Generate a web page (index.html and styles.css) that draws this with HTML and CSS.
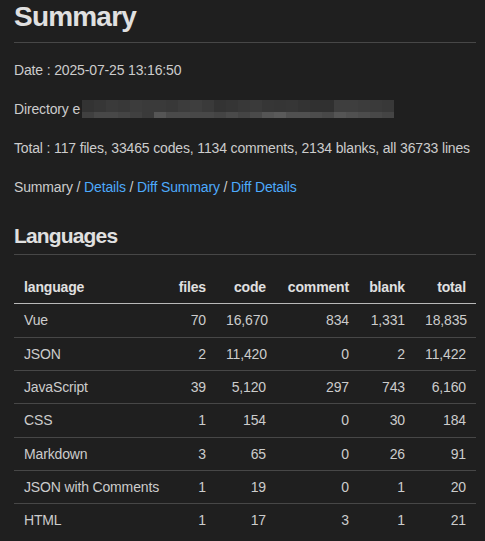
FILE: index.html
```html
<!DOCTYPE html>
<html lang="en">
<head>
<meta charset="utf-8">
<title>Summary</title>
<link rel="stylesheet" href="styles.css">
</head>
<body>
<main class="doc">
  <h1 class="h1">Summary</h1>
  <p class="para">Date : 2025-07-25 13:16:50</p>
  <p class="para">Directory e<span class="blur" aria-hidden="true"></span></p>
  <p class="para">Total : 117 files, 33465 codes, 1134 comments, 2134 blanks, all 36733 lines</p>
  <p class="para">Summary / <a class="link" href="#">Details</a> / <a class="link" href="#">Diff Summary</a> / <a class="link" href="#">Diff Details</a></p>
  <h2 class="h2">Languages</h2>
  <table class="stats">
    <colgroup>
      <col class="c-lang"><col class="c-files"><col class="c-code"><col class="c-comment"><col class="c-blank"><col class="c-total">
    </colgroup>
    <thead>
      <tr><th class="left">language</th><th>files</th><th>code</th><th>comment</th><th>blank</th><th>total</th></tr>
    </thead>
    <tbody>
      <tr><td class="left">Vue</td><td>70</td><td>16,670</td><td>834</td><td>1,331</td><td>18,835</td></tr>
      <tr><td class="left">JSON</td><td>2</td><td>11,420</td><td>0</td><td>2</td><td>11,422</td></tr>
      <tr><td class="left">JavaScript</td><td>39</td><td>5,120</td><td>297</td><td>743</td><td>6,160</td></tr>
      <tr><td class="left">CSS</td><td>1</td><td>154</td><td>0</td><td>30</td><td>184</td></tr>
      <tr><td class="left">Markdown</td><td>3</td><td>65</td><td>0</td><td>26</td><td>91</td></tr>
      <tr><td class="left">JSON with Comments</td><td>1</td><td>19</td><td>0</td><td>1</td><td>20</td></tr>
      <tr><td class="left">HTML</td><td>1</td><td>17</td><td>3</td><td>1</td><td>21</td></tr>
    </tbody>
  </table>
</main>
</body>
</html>
```
FILE: styles.css
```css
html, body {
  margin: 0;
  padding: 0;
  background: #1f1f1f;
}
body {
  color: #cccccc;
  font-family: "Liberation Sans", Arial, sans-serif;
  font-size: 14px;
  line-height: 23px;
  letter-spacing: -0.15px;
  overflow: hidden;
}
.doc {
  padding: 0 9px 0 14px;
}
.h1 {
  margin: 0;
  font-size: 28px;
  line-height: 34px;
  font-weight: 600;
  letter-spacing: -0.8px;
  color: #e0e0e0;
  padding-bottom: 8px;
  border-bottom: 1px solid rgba(255, 255, 255, 0.18);
}
.h2 {
  margin: 24px 0 16px;
  font-size: 21px;
  line-height: 25px;
  font-weight: 600;
  letter-spacing: -0.85px;
  color: #e0e0e0;
  padding-bottom: 6px;
  border-bottom: 1px solid rgba(255, 255, 255, 0.18);
}
.para {
  margin: 16px 0;
  white-space: nowrap;
}
.link {
  color: #4daafc;
  text-decoration: none;
}
.blur {
  display: inline-block;
  vertical-align: top;
  margin-top: 2px;
  margin-left: 2px;
  width: 312px;
  height: 18px;
  background:
    linear-gradient(90deg,
      #333 0 12px, #363636 12px 24px, #3a3a3a 24px 36px, #383838 36px 48px,
      #3c3c3c 48px 60px, #3a3a3a 60px 72px, #3a3a3a 72px 84px, #383838 84px 96px,
      #3c3c3c 96px 108px, #3e3e3e 108px 120px, #3a3a3a 120px 132px, #333 132px 144px,
      #353535 144px 156px, #383838 156px 168px, #3a3a3a 168px 180px, #363636 180px 192px,
      #353535 192px 204px, #363636 204px 216px, #333 216px 228px, #303030 228px 240px,
      #303030 240px 252px, #3e3e3e 252px 264px, #3e3e3e 264px 276px, #3c3c3c 276px 288px,
      #3a3a3a 288px 300px, #383838 300px 312px) top / 100% 12px no-repeat,
    linear-gradient(90deg,
      #404040 0 12px, #484848 12px 24px, #484848 24px 36px, #444 36px 48px,
      #404040 48px 60px, #3a3a3a 60px 72px, #555 72px 84px, #4a4a4a 84px 96px,
      #4a4a4a 96px 108px, #484848 108px 120px, #484848 120px 132px, #444 132px 144px,
      #4a4a4a 144px 156px, #444 156px 168px, #4a4a4a 168px 180px, #555 180px 192px,
      #5a5a5a 192px 204px, #505050 204px 216px, #505050 216px 228px, #4c4c4c 228px 240px,
      #484848 240px 252px, #555 252px 264px, #505050 264px 276px, #4c4c4c 276px 288px,
      #484848 288px 300px, #444 300px 312px) bottom / 100% 6px no-repeat;
}
.stats {
  width: 100%;
  table-layout: fixed;
  border-collapse: collapse;
  margin: 16px 0 0;
}
.c-lang { width: 142px; }
.c-files { width: 60px; }
.c-code { width: 60px; }
.c-comment { width: 83px; }
.c-blank { width: 56px; }
.c-total { width: 61px; }
.stats th, .stats td {
  padding: 5px 10px;
  line-height: 22.33px;
  text-align: right;
  white-space: nowrap;
}
.stats th {
  color: #e0e0e0;
  font-weight: 700;
  border-bottom: 1px solid rgba(255, 255, 255, 0.69);
}
.stats tbody tr + tr td {
  border-top: 1px solid rgba(255, 255, 255, 0.18);
}
.stats .left {
  text-align: left;
}
```
